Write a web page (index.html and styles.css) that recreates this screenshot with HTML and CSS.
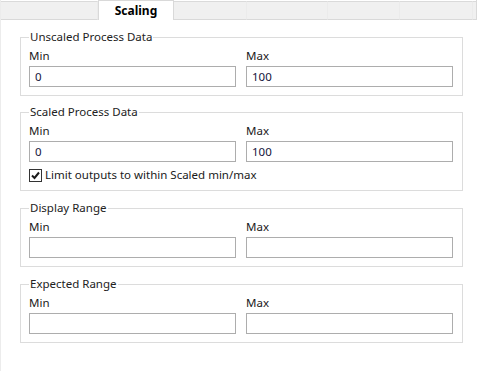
FILE: index.html
```html
<!DOCTYPE html>
<html lang="en">
<head>
<meta charset="utf-8">
<title>Scaling</title>
<link rel="stylesheet" href="styles.css">
</head>
<body>
<div class="window">
  <div class="tabstrip">
    <div class="tab tab-first"></div>
    <div class="tab tab-active">Scaling</div>
    <div class="tab tab-a"></div>
    <div class="tab tab-b"></div>
    <div class="tab tab-c"></div>
    <div class="tab tab-d"></div>
    <div class="tab tab-fill"></div>
  </div>
  <div class="page">
    <fieldset class="group">
      <legend>Unscaled Process Data</legend>
      <div class="fields">
        <label class="field"><span class="caption">Min</span><input class="box" type="text" value="0"></label>
        <label class="field"><span class="caption">Max</span><input class="box" type="text" value="100"></label>
      </div>
    </fieldset>
    <fieldset class="group group-scaled">
      <legend>Scaled Process Data</legend>
      <div class="fields">
        <label class="field"><span class="caption">Min</span><input class="box" type="text" value="0"></label>
        <label class="field"><span class="caption">Max</span><input class="box" type="text" value="100"></label>
      </div>
      <label class="check-row">
        <span class="check"><svg width="11" height="11" viewBox="0 0 11 11"><path d="M2 5.5 L4.5 8 L9 2.5" fill="none" stroke="#1a1a1a" stroke-width="2"/></svg></span>
        <span>Limit outputs to within Scaled min/max</span>
      </label>
    </fieldset>
    <fieldset class="group group-lower">
      <legend>Display Range</legend>
      <div class="fields">
        <label class="field"><span class="caption">Min</span><input class="box" type="text" value=""></label>
        <label class="field"><span class="caption">Max</span><input class="box" type="text" value=""></label>
      </div>
    </fieldset>
    <fieldset class="group group-lower">
      <legend>Expected Range</legend>
      <div class="fields">
        <label class="field"><span class="caption">Min</span><input class="box" type="text" value=""></label>
        <label class="field"><span class="caption">Max</span><input class="box" type="text" value=""></label>
      </div>
    </fieldset>
  </div>
</div>
</body>
</html>
```
FILE: styles.css
```css
html, body {
  margin: 0;
  padding: 0;
  background: #ffffff;
}
body {
  font-family: "Noto Sans", "Open Sans", sans-serif;
  font-size: 11.5px;
  color: #1e1e1e;
}
.window {
  width: 480px;
  height: 371px;
  box-sizing: border-box;
  border-left: 1px solid #ececec;
}
.tabstrip {
  display: flex;
  height: 20px;
  width: 476px;
  box-sizing: border-box;
  border-right: 1px solid #d9d9d9;
}
.tab {
  box-sizing: border-box;
  background: #f0f0f0;
  border-top: 1px solid #dadada;
  border-bottom: 1px solid #d9d9d9;
  border-right: 1px solid #ebebeb;
  margin-top: 1px;
  height: 19px;
}
.tab-first { width: 97px; }
.tab-active {
  width: 76px;
  height: 20px;
  margin-top: 0;
  background: #ffffff;
  border: 1px solid #d9d9d9;
  border-bottom: none;
  font-weight: bold;
  font-size: 12px;
  color: #000;
  text-align: center;
  line-height: 19px;
}
.tab-a { width: 73px; }
.tab-b { width: 81px; }
.tab-c { width: 72px; }
.tab-d { width: 73px; }
.tab-fill { flex: 1; border-right: none; }
.page {
  padding: 0 17px 0 19px;
}
.group {
  margin: 9px 0 0 0;
  border: 1px solid #dcdcdc;
  padding: 0 9px 8px 8px;
  min-width: 0;
}
.group-scaled { margin-top: 8px; }
.group-lower { margin-top: 9px; }
.group legend {
  padding: 0 1px;
  line-height: 16px;
  color: #222;
}
.fields {
  display: grid;
  grid-template-columns: 1fr 1fr;
  column-gap: 10px;
}
.field {
  display: block;
}
.caption {
  display: block;
  line-height: 16px;
  margin-top: 3px;
  color: #1a1a1a;
}
.box {
  display: block;
  box-sizing: border-box;
  width: 100%;
  height: 21px;
  margin: 2px 0 0 0;
  border: 1px solid #adadad;
  padding: 0 5px;
  font-family: inherit;
  font-size: 11.5px;
  color: #14143c;
  background: #fff;
  outline: none;
}
.check-row {
  display: flex;
  align-items: center;
  gap: 3px;
  margin-top: 5px;
  line-height: 16px;
  color: #1a1a1a;
}
.check {
  box-sizing: border-box;
  width: 13px;
  height: 13px;
  border: 1px solid #333;
  background: #fff;
  display: flex;
  align-items: center;
  justify-content: center;
}
.check svg {
  display: block;
}
.group-scaled { padding-bottom: 7px; }
```
